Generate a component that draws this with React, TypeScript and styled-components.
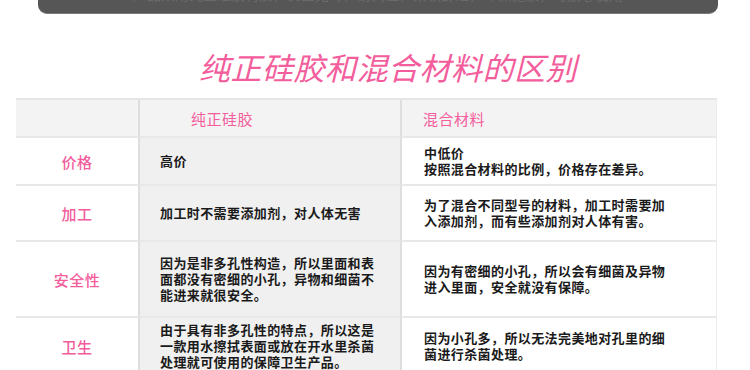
import React from "react";
import styled, { createGlobalStyle } from "styled-components";

const Global = createGlobalStyle`
  html, body { margin: 0; padding: 0; background: #fff; }
  body { font-family: "Noto Sans CJK SC", "Noto Sans", sans-serif; width: 750px; height: 370px; overflow: hidden; }
`;

const Page = styled.div`
  display: flex;
  flex-direction: column;
  width: 750px;
`;

const TopBar = styled.div`
  margin-left: 38px;
  width: 680px;
  height: 13px;
  background: #565656;
  border-bottom: 1px solid #7a7a7a;
  border-radius: 0 0 9px 9px;
  overflow: hidden;
  display: flex;
  justify-content: center;
`;

const TopBarText = styled.div`
  margin-top: -16px;
  font-size: 14px;
  line-height: 20px;
  color: #6a6a6a;
  white-space: nowrap;
`;

const Title = styled.h1`
  margin: 31px 0 0 0;
  padding-left: 26px;
  text-align: center;
  font-size: 31px;
  line-height: 44px;
  font-weight: 400;
  font-style: italic;
  color: #f35d9c;
  letter-spacing: 0.5px;
`;

const Table = styled.div`
  margin: 9px 0 0 16px;
  width: 701px;
  display: grid;
  grid-template-columns: 122px 262px 317px;
  border-top: 2px solid #e6e6e6;
`;

type CellProps = { $col: 0 | 1 | 2; $head?: boolean; $h: number };

const Cell = styled.div<CellProps>`
  box-sizing: border-box;
  height: ${(p) => p.$h}px;
  display: flex;
  align-items: center;
  justify-content: ${(p) => (p.$col === 0 ? "center" : "flex-start")};
  padding-left: ${(p) => (p.$col === 0 ? 0 : p.$head ? (p.$col === 1 ? 51 : 21) : p.$col === 1 ? 20 : 22)}px;
  background: ${(p) => (p.$head ? "#f3f3f3" : p.$col === 1 ? "#f0f0f0" : "#fff")};
  border-bottom: 2px solid #e8e8e8;
  border-left: ${(p) => (p.$col === 0 ? "none" : "2px solid #dedede")};
  border-right: ${(p) => (p.$col === 2 ? "1px solid #ececec" : "none")};
`;

const HeadText = styled.span`
  font-size: 15px;
  color: #f35d9c;
  letter-spacing: 0.5px;
`;

const Label = styled.span`
  font-size: 15px;
  font-weight: 500;
  color: #f35d9c;
  letter-spacing: 0.5px;
`;

const Body = styled.p<{ $w: number }>`
  margin: 0;
  width: ${(p) => p.$w}px;
  font-size: 13px;
  line-height: 16px;
  font-weight: 700;
  color: #1a1a1a;
  letter-spacing: 0.4px;
`;

const rows: { label: string; h: number; a: React.ReactNode; b: React.ReactNode }[] = [
  {
    label: "价格",
    h: 48,
    a: "高价",
    b: (
      <>
        中低价
        <br />
        按照混合材料的比例，价格存在差异。
      </>
    ),
  },
  {
    label: "加工",
    h: 56,
    a: "加工时不需要添加剂，对人体无害",
    b: "为了混合不同型号的材料，加工时需要加入添加剂，而有些添加剂对人体有害。",
  },
  {
    label: "安全性",
    h: 76,
    a: "因为是非多孔性构造，所以里面和表面都没有密细的小孔，异物和细菌不能进来就很安全。",
    b: "因为有密细的小孔，所以会有细菌及异物进入里面，安全就没有保障。",
  },
  {
    label: "卫生",
    h: 58,
    a: "由于具有非多孔性的特点，所以这是一款用水擦拭表面或放在开水里杀菌处理就可使用的保障卫生产品。",
    b: "因为小孔多，所以无法完美地对孔里的细菌进行杀菌处理。",
  },
];

export default function App() {
  return (
    <Page>
      <Global />
      <TopBar>
        <TopBarText>产品采用纯正硅胶材质，安全无毒，耐高温，柔软舒适，环保健康，可放心使用</TopBarText>
      </TopBar>
      <Title>纯正硅胶和混合材料的区别</Title>
      <Table>
        <Cell $col={0} $head $h={38} />
        <Cell $col={1} $head $h={38}>
          <HeadText>纯正硅胶</HeadText>
        </Cell>
        <Cell $col={2} $head $h={38}>
          <HeadText>混合材料</HeadText>
        </Cell>
        {rows.map((r) => (
          <React.Fragment key={r.label}>
            <Cell $col={0} $h={r.h}>
              <Label>{r.label}</Label>
            </Cell>
            <Cell $col={1} $h={r.h}>
              <Body $w={222}>{r.a}</Body>
            </Cell>
            <Cell $col={2} $h={r.h}>
              <Body $w={248}>{r.b}</Body>
            </Cell>
          </React.Fragment>
        ))}
      </Table>
    </Page>
  );
}
